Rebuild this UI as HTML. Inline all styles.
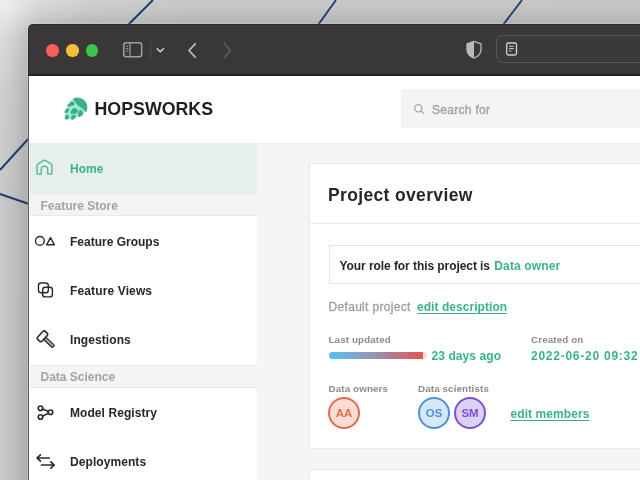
<!DOCTYPE html>
<html><head><meta charset="utf-8">
<style>
*{box-sizing:border-box;margin:0;padding:0}
html,body{width:640px;height:480px;overflow:hidden}
body{font-family:"Liberation Sans",sans-serif;position:relative;background:#c9c9c9;}
.a{position:absolute}
.t{position:absolute;white-space:nowrap;line-height:1}
.b{font-weight:bold}
#bg{left:-10px;top:-10px;width:660px;height:500px;background:radial-gradient(circle at 10px 10px,#efefef 0,#dcdcdc 40px,#d0d0d0 90px,#cacaca 200px,#c8c8c8 100%);}
#shadow{left:28px;top:24px;width:640px;height:480px;border-radius:5px 0 0 0;box-shadow:0 0 0 1px rgba(255,255,255,.16),-2px 2px 24px 6px rgba(0,0,0,.18)}
#win{left:28px;top:24px;width:640px;height:480px;background:#fff;border-radius:5px 0 0 0;overflow:hidden}
.sec{position:absolute;left:29.5px;width:227px;height:23px;background:#f4f4f4;border-top:1px solid #e9e9e9;border-bottom:1px solid #e9e9e9}
.sect{color:#a3a3a3;font-weight:bold;font-size:12px}
.item{font-weight:bold;font-size:12px;color:#272727;left:70px}
.g{color:#3ab389}
.lbl{font-size:9.8px;color:#8c8c8c;font-weight:bold;letter-spacing:.12px}
.av{position:absolute;width:32px;height:32px;border-radius:50%;border:2px solid;font-size:11.500px;font-weight:bold;text-align:center;line-height:28.500px}
svg{position:absolute;overflow:visible}
</style></head><body><div id="all" class="a" style="left:0;top:0;width:640px;height:480px;filter:blur(.45px)">
<div id="bg" class="a"></div>
<svg style="left:0;top:0" width="640" height="480">
<g stroke="#223f74" stroke-width="1.9" fill="none">
<line x1="153" y1="0" x2="128" y2="25"/>
<line x1="336" y1="0" x2="318" y2="25"/>
<line x1="522" y1="0" x2="503" y2="25"/>
<line x1="0" y1="170" x2="29" y2="138"/>
<line x1="0" y1="194" x2="29" y2="204"/>
</g></svg>
<div id="shadow" class="a"></div>
<div id="win" class="a"></div>

<!-- title bar -->
<div class="a" style="left:28px;top:24px;width:612px;height:52px;background:#393737;border-radius:5px 0 0 0;border-top:1.5px solid #2b2a2a;border-left:1.5px solid #2b2a2a;border-bottom:2px solid #222121"></div>
<div class="a" style="left:46px;top:44px;width:12.5px;height:12.5px;border-radius:50%;background:#f5615a"></div>
<div class="a" style="left:66px;top:44px;width:12.5px;height:12.5px;border-radius:50%;background:#f9bc3a"></div>
<div class="a" style="left:85.5px;top:44px;width:12.5px;height:12.5px;border-radius:50%;background:#38c74a"></div>
<!-- sidebar toggle icon -->
<svg style="left:0;top:0" width="640" height="480" fill="none" stroke-linecap="round" stroke-linejoin="round">
 <rect x="123.7" y="42.7" width="18" height="14" rx="2.5" stroke="#a09e9e" stroke-width="1.500"/>
 <line x1="130" y1="43" x2="130" y2="56.5" stroke="#a09e9e" stroke-width="1.200"/>
 <path d="M126 46.2h2M126 48.6h2M126 51h2" stroke="#a09e9e" stroke-width="1"/>
 <line x1="150.7" y1="41" x2="150.7" y2="59" stroke="#4e4c4c" stroke-width="1"/>
 <path d="M157.200 48.700l3.100 3l3.100-3" stroke="#d0cece" stroke-width="1.600"/>
 <path d="M195.200 43.800l-6.200 6.700l6.200 6.700" stroke="#bdbbbb" stroke-width="1.800"/>
 <path d="M224.5 43.5l6 7l-6 7" stroke="#5c5a5a" stroke-width="1.9"/>
 <!-- shield -->
 <path d="M474 41.3l7 2.6v5.6c0 4-2.8 7-7 8.6c-4.200-1.600-7-4.600-7-8.600v-5.600z" stroke="#b9b7b7" stroke-width="1.3"/>
 <path d="M474 41.3v16.800c-4.200-1.600-7-4.600-7-8.600v-5.600z" fill="#b9b7b7" stroke="none"/>
 <!-- url bar -->
 <rect x="496.500" y="35.500" width="160" height="27" rx="6.5" stroke="#575555" stroke-width="1.100" fill="#3b3939"/>
 <rect x="506.700" y="43" width="9.800" height="12" rx="1.500" stroke="#d2d0d0" stroke-width="1.300"/>
 <path d="M509.500 46.200h4M509.500 48.600h4M509.500 51h1.500" stroke="#d2d0d0" stroke-width="1"/>
</svg>

<!-- header -->
<div class="t b" style="left:94.500px;top:101.200px;font-size:17.8px;color:#1f1f1f;letter-spacing:0px">HOPSWORKS</div>
<div class="a" style="left:401px;top:89px;width:300px;height:39px;background:#f4f4f4"></div>
<svg style="left:0;top:0" width="640" height="480" fill="none"><circle cx="418.300" cy="108.300" r="3.600" stroke="#a9a9a9" stroke-width="1.300"/><path d="M421 111l2.300 2.300" stroke="#a9a9a9" stroke-width="1.300" stroke-linecap="round"/></svg>
<div class="t" style="left:432px;top:103.500px;font-size:12px;color:#a5a5a5;letter-spacing:.3px;-webkit-text-stroke:.45px #a5a5a5">Search for</div>

<!-- main bg -->
<div class="a" style="left:29.5px;top:143px;width:640px;height:400px;background:#f5f5f5;border-top:1px solid #ececec"></div>
<!-- sidebar -->
<div class="a" style="left:29.5px;top:143px;width:227px;height:400px;background:#fff"></div>
<div class="a" style="left:29.5px;top:143px;width:227px;height:50px;background:#e6efec"></div>
<div class="t item g" style="top:163.400px;">Home</div>
<div class="sec" style="top:193px"></div>
<div class="t sect" style="left:40.500px;top:199.500px">Feature Store</div>
<div class="t item" style="top:235.800px">Feature Groups</div>
<div class="t item" style="top:284.800px;letter-spacing:.13px">Feature Views</div>
<div class="t item" style="top:334px;letter-spacing:.08px">Ingestions</div>
<div class="sec" style="top:364.500px"></div>
<div class="t sect" style="left:40.500px;top:370.800px">Data Science</div>
<div class="t item" style="top:406.800px;letter-spacing:.07px">Model Registry</div>
<div class="t item" style="top:456px;letter-spacing:.07px">Deployments</div>


<!-- logo -->
<svg style="left:56px;top:90px" width="40" height="36" viewBox="0 0 533 480">
 <path d="M222,128 L165,195 L128,290 L130,380 L212,388 L252,376 L290,346 L345,340 L362,300 L392,288 L300,160 Z" fill="#a4ead0" stroke="#a4ead0" stroke-width="8" stroke-linejoin="round"/>
 <g fill="#3bb087" stroke="#3bb087" stroke-width="10" stroke-linejoin="round">
 <path d="M228,122 C262,96 338,98 384,150 C418,192 420,250 400,290 C372,252 330,230 284,198 C274,170 258,148 228,122 Z"/>
 <path d="M153,206 L200,156 L243,168 L238,198 L200,214 L158,214 Z"/>
 <path d="M116,298 L136,258 L166,248 L164,288 L142,303 Z"/>
 <path d="M198,300 L216,258 L254,242 L288,266 L274,308 L236,320 L204,314 Z"/>
 <path d="M293,343 L302,292 L325,264 L360,300 L348,338 L312,355 Z"/>
 <path d="M121,383 L124,342 L150,334 L170,346 L164,383 L136,390 Z"/>
 <path d="M208,390 L208,347 L236,338 L266,347 L249,378 L216,393 Z"/>
 </g>
</svg>
<!-- sidebar icons -->
<svg style="left:0;top:0" width="640" height="480" fill="none" stroke="#2b2b2b" stroke-width="1.4" stroke-linecap="round" stroke-linejoin="round">
 <path d="M37.100,165.400 Q37.100,164.600 37.800,164.100 L43.700,160.400 Q44.500,159.900 45.300,160.400 L51.200,164.100 Q51.900,164.600 51.900,165.400 V173.900 H47.700 V169.500 a3.200,3.200 0 0 0 -6.400,0 V173.900 H37.100 Z" stroke="#5fba9a" stroke-width="1.5"/>
 <circle cx="39.900" cy="240.900" r="4.400"/>
 <path d="M46.600,244.800 L54.400,244.800 L50.500,237.600 Z"/>
 <rect x="38.450" y="282.950" width="9.850" height="9.850" rx="2.500"/>
 <rect x="42.700" y="287.200" width="9.700" height="9.700" rx="2.500"/>
 <g transform="translate(42.500,336.300) rotate(43)">
  <rect x="-3" y="-5.500" width="6" height="11" rx="1.800" stroke-width="1.600"/>
  <rect x="3.200" y="-1.600" width="12" height="3.200" rx="1.200" fill="#a5a5a5" stroke-width="1.200"/>
 </g>
 <circle cx="40.500" cy="408.250" r="2.250" stroke-width="1.650"/>
 <circle cx="50.500" cy="412.200" r="2.250" stroke-width="1.650"/>
 <circle cx="40.500" cy="417" r="2.250" stroke-width="1.650"/>
 <path d="M42.700,409.100 L48.300,411.400 M42.700,416.100 L48.300,413.200" stroke-width="1.600"/>
 <g stroke-width="1.700">
 <path d="M49.250,458 H37 M40.400,454.800 L37,458 L40.400,461.200"/>
 <path d="M41.500,465 H54.200 M50.800,461.800 L54.200,465 L50.800,468.200"/>
 </g>
</svg>
<!-- card -->
<div class="a" style="left:308.500px;top:163px;width:400px;height:286px;background:#fff;border:1px solid #e9e9e9"></div>
<div class="a" style="left:309px;top:223px;width:400px;height:1px;background:#e9e9e9"></div>
<div class="t b" style="left:328px;top:186.500px;font-size:17.500px;color:#272727;letter-spacing:.35px">Project overview</div>
<div class="a" style="left:328.500px;top:245px;width:400px;height:39px;background:#fff;border:1px solid #e2e2e2"></div>
<div class="t b" style="left:339.500px;top:259.900px;font-size:12px;color:#272727;letter-spacing:-.07px">Your role for this project is</div>
<div class="t b g" style="left:494.300px;top:259.900px;font-size:12px;letter-spacing:.13px">Data owner</div>
<div class="t" style="left:328.500px;top:301px;font-size:12px;color:#9d9d9d;letter-spacing:.32px;-webkit-text-stroke:.3px #9d9d9d">Default project</div>
<div class="t b g" style="left:417px;top:301px;font-size:12px;letter-spacing:.05px;text-decoration:underline;text-underline-offset:1.5px">edit description</div>

<div class="t lbl" style="left:328.500px;top:334.800px;">Last updated</div>
<div class="a" style="left:328.500px;top:352px;width:98px;height:6.500px;border-radius:3.500px;background:#f7dcdc;overflow:hidden"><div style="width:94px;height:100%;background:linear-gradient(90deg,#58c1ee,#8a9cc0 40%,#dc5a5c 95%)"></div></div>
<div class="t b g" style="left:431.500px;top:350px;font-size:12px;letter-spacing:.08px">23 days ago</div>
<div class="t lbl" style="left:531px;top:334.800px;">Created on</div>
<div class="t b g" style="left:531px;top:350px;font-size:12px;letter-spacing:.75px">2022-06-20 09:32</div>

<div class="t lbl" style="left:328.500px;top:384.200px;">Data owners</div>
<div class="t lbl" style="left:418px;top:384.200px;">Data scientists</div>
<div class="av" style="left:328px;top:397px;border-color:#e06a4e;background:#fadcd4;color:#e06a4e">AA</div>
<div class="av" style="left:418px;top:397px;border-color:#4b90dd;background:#d8e7f8;color:#4b90dd">OS</div>
<div class="av" style="left:454px;top:397px;border-color:#7b50d0;background:#ddd0f5;color:#7b50d0">SM</div>
<div class="t b g" style="left:510.500px;top:407.600px;font-size:12px;letter-spacing:.08px;text-decoration:underline;text-underline-offset:1.5px">edit members</div>

<div class="a" style="left:308.500px;top:469px;width:400px;height:50px;background:#fff;border:1px solid #e9e9e9"></div>

<!-- window left border -->
<div class="a" style="left:27.6px;top:76px;width:1.9px;height:410px;background:#5e5e5e"></div>
</div></body></html>
